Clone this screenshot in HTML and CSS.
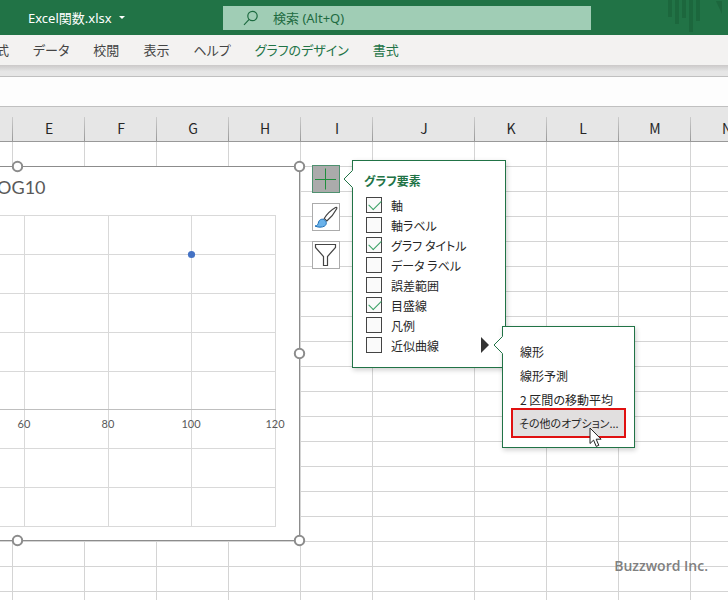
FILE: index.html
```html
<!DOCTYPE html>
<html lang="ja">
<head>
<meta charset="utf-8">
<title>Excel関数.xlsx</title>
<link rel="stylesheet" href="styles.css">
</head>
<body>
<div class="app">
  <header class="titlebar">
    <button class="filename" type="button">Excel関数.xlsx<span class="caret"></span></button>
    <label class="search">
      <svg width="16" height="16" viewBox="0 0 16 16" fill="none" stroke="#1e6b41" stroke-width="1.2"><circle cx="9.5" cy="6" r="4.7"/><path d="M6.2 9.4 1 14.8"/></svg>
      <input type="text" placeholder="検索 (Alt+Q)">
    </label>
    <svg class="art" width="60" height="35" viewBox="0 0 60 35" fill="#1c673d"><path d="M0 0h4v17H0zM7 0h4v24H7zM14 0h4v18h-4zM21 0h4v32h-4zM28 0h4v21h-4zM48 1h6v13z"/></svg>
  </header>
  <nav class="tabs">
    <button type="button">数式</button>
    <button type="button">データ</button>
    <button type="button">校閲</button>
    <button type="button">表示</button>
    <button type="button">ヘルプ</button>
    <button type="button" class="context">グラフのデザイン</button>
    <button type="button" class="context">書式</button>
  </nav>
  <div class="ribbon-edge"></div>
  <input class="formula" type="text" aria-label="数式バー">
  <main class="sheet">
    <table>
      <colgroup><col class="edge"><col><col><col><col><col><col class="wide"><col><col><col><col></colgroup>
      <thead><tr><th></th><th>E</th><th>F</th><th>G</th><th>H</th><th>I</th><th>J</th><th>K</th><th>L</th><th>M</th><th>N</th></tr></thead>
      <tbody id="rows"></tbody>
    </table>

    <svg class="chart" width="306" height="388" viewBox="0 159 306 388">
      <path class="chart-area" d="M-265 166.5H299.500V540.500H-265z"/>
      <path class="grid" d="M0 215.500H276M0 254.500H276M0 293.500H276M0 332.500H276M0 371.500H276M0 448.500H276M0 487.500H276M0 526.500H276M24.500 215V527M108.500 215V527M191.500 215V527M275.500 215V527"/>
      <path class="axis" d="M0 409.500H276"/>
      <text class="chart-title" x="17" y="194">LOG10</text>
      <g class="ticks"><text x="24" y="428">60</text><text x="108" y="428">80</text><text x="191" y="428">100</text><text x="275" y="428">120</text></g>
      <circle cx="191.500" cy="254.500" r="3.600" fill="#4472c4"/>
      <g class="handles"><circle cx="17.500" cy="166.500" r="4.700"/><circle cx="299.500" cy="166.500" r="4.700"/><circle cx="299.500" cy="353.500" r="4.700"/><circle cx="17.500" cy="540.500" r="4.700"/><circle cx="299.500" cy="540.500" r="4.700"/></g>
    </svg>

    <div class="chart-tools">
      <button type="button" class="active" aria-label="グラフ要素"><svg width="26" height="26" viewBox="0 0 26 26" stroke="#1f8f3c" stroke-width="1"><path d="M12.500 2.500v21M2 13.500h21"/></svg></button>
      <button type="button" aria-label="グラフ スタイル"><svg width="26" height="26" viewBox="0 0 26 26"><path d="M11.200 14.500C14 10 19 5.500 22.500 3.500c1-.5 1.700.2 1.200 1.200C21.500 9 18 13.500 13.800 17z" fill="#fff" stroke="#444" stroke-width="1.200"/><path d="M2 22c2.700-.2 3-1.800 3.600-4 .8-2.700 3.900-3.700 6.200-1.900 2.200 1.700 1.900 4.600-.3 6C9.200 23.500 5 23.600 2 22z" fill="#6ab2ea" stroke="#1f6fb5"/></svg></button>
      <button type="button" aria-label="グラフ フィルター"><svg width="26" height="26" viewBox="0 0 26 26" fill="#fff" stroke="#444" stroke-width="1.200"><path d="M2.500 2.500h20v3l-8 9v9h-4v-9l-8-9z"/></svg></button>
    </div>

    <section class="popup elements">
      <svg class="notch" width="10" height="18" viewBox="0 0 10 18"><path d="M10 0 1 9l9 9z" fill="#fff"/><path d="M9.500.5 1 9l8.500 8.500" fill="none" stroke="#217346"/></svg>
      <h2>グラフ要素</h2>
      <label><input type="checkbox" checked>軸</label>
      <label><input type="checkbox">軸ラベル</label>
      <label><input type="checkbox" checked>グラフ タイトル</label>
      <label><input type="checkbox">データ ラベル</label>
      <label><input type="checkbox">誤差範囲</label>
      <label><input type="checkbox" checked>目盛線</label>
      <label><input type="checkbox">凡例</label>
      <label><input type="checkbox">近似曲線<span class="more"></span></label>
    </section>

    <section class="popup trend">
      <svg class="notch" width="10" height="18" viewBox="0 0 10 18"><path d="M10 0 1 9l9 9z" fill="#fff"/><path d="M9.500.5 1 9l8.500 8.500" fill="none" stroke="#217346"/></svg>
      <button type="button">線形</button>
      <button type="button">線形予測</button>
      <button type="button">2 区間の移動平均</button>
      <button type="button" class="current">その他のオプション...</button>
    </section>

    <svg class="cursor" width="14" height="21" viewBox="0 0 14 21"><path d="M1 1v15.500l3.600-3.400 2.600 6.300 2.600-1.100-2.600-6.100h4.900z" fill="#fff" stroke="#222"/></svg>
    <p class="watermark">Buzzword Inc.</p>
  </main>
</div>
<script src="rows.js"></script>
</body>
</html>
```

FILE: rows.js
```js
const body = document.getElementById('rows');
const columns = document.querySelectorAll('col').length;
for (let r = 0; r < 60; r++) {
  const row = body.insertRow();
  for (let c = 0; c < columns; c++) row.insertCell();
}
```

FILE: styles.css
```css
* { box-sizing: border-box; }

body {
  margin: 0;
  font-family: "Noto Sans CJK JP", sans-serif;
  font-feature-settings: "palt";
  font-size: 12px;
  color: #262626;
}

button, input {
  font: inherit;
  font-feature-settings: inherit;
  color: inherit;
  border: 0;
  padding: 0;
  margin: 0;
  background: none;
}

svg { display: block; }

.app { display: flex; flex-direction: column; height: 100vh; overflow: hidden; }

.titlebar {
  display: flex;
  align-items: center;
  flex: none;
  height: 35px;
  padding-left: 28px;
  background: #217346;
}
.filename {
  display: flex;
  align-items: center;
  gap: 7px;
  flex: 0 0 195px;
  font-family: "Noto Sans", "Noto Sans CJK JP", sans-serif;
  font-size: 13px;
  color: #fff;
}
.caret { border: 3px solid transparent; border-top-color: #fff; border-bottom: 0; }
.search {
  display: flex;
  align-items: center;
  gap: 14px;
  flex: 0 1 368px;
  height: 24px;
  padding-left: 20px;
  background: #a0cdb5;
}
.search input {
  flex: 1;
  min-width: 0;
  font-family: "Noto Sans", "Noto Sans CJK JP", sans-serif;
  font-size: 13px;
}
.search input::placeholder { color: #1e6b41; opacity: 1; }
.art { margin-left: auto; }

.tabs {
  display: flex;
  align-items: center;
  flex: none;
  gap: 24px;
  height: 30px;
  margin-left: -17px;
  padding-bottom: 2px;
  background: #f3f2f1;
  font-size: 13px;
  color: #444;
  white-space: nowrap;
}
.tabs .context { color: #217346; }
.ribbon-edge {
  flex: none;
  height: 12px;
  border-bottom: 1px solid #c0c0c0;
  background: linear-gradient(#cbc9c9, #e6e6e6 60%);
}
.formula {
  flex: none;
  height: 30px;
  border-bottom: 1px solid #c0c0c0;
  background: #fdfdfd;
}

.sheet { position: relative; flex: 1; min-height: 0; overflow: hidden; background: #fff; }
table { table-layout: fixed; width: 763px; border-spacing: 0; }
col { width: 72px; }
col.edge { width: 13px; }
col.wide { width: 102px; }
th {
  height: 35px;
  padding: 8px 0 0;
  border-bottom: 1px solid #999;
  background: linear-gradient(#ccc, #999) right bottom / 1px 24px no-repeat #e6e6e6;
  font-size: 14px;
  font-weight: 400;
  line-height: 24px;
}
td { height: 25px; padding: 0; border: solid #d4d4d4; border-width: 0 1px 1px 0; }

.chart { position: absolute; left: 0; top: 52px; }
.chart-area { fill: #fff; stroke: #8c8c8c; }
.grid { stroke: #d9d9d9; }
.axis { stroke: #bfbfbf; }
.chart-title { font: 18px Lato, sans-serif; fill: #595959; text-anchor: middle; }
.ticks { font: 11px Lato, sans-serif; fill: #595959; text-anchor: middle; }
.handles { fill: #fff; stroke: #8c8c8c; stroke-width: 2; }

.chart-tools {
  position: absolute;
  left: 312px;
  top: 58px;
  display: flex;
  flex-direction: column;
  gap: 10px;
}
.chart-tools button { width: 28px; height: 28px; border: 1px solid #ababab; background: #fff; }
.chart-tools .active { border-color: #4f9170; background: #ababab; }

.popup {
  position: absolute;
  border: 1px solid #217346;
  background: #fff;
  box-shadow: 1px 2px 5px rgba(0, 0, 0, 0.2);
  white-space: nowrap;
}
.notch { position: absolute; left: -10px; top: 9px; }
.elements { left: 352px; top: 53px; width: 154px; padding: 10px 11px 12px; }
h2 { margin: 0 0 4px; font-size: 12px; line-height: 20px; color: #217346; }
.elements label {
  display: flex;
  align-items: center;
  gap: 9px;
  height: 20px;
  padding-left: 2px;
}
.elements input {
  appearance: none;
  width: 16px;
  height: 16px;
  border: 1px solid #444;
  background: #fafafa;
}
.elements input:checked::before {
  content: "";
  display: block;
  width: 11px;
  height: 6px;
  margin: 2px;
  border: solid #3aa065;
  border-width: 0 0 1px 1px;
  transform: rotate(-45deg);
}
.more { margin: 0 5px 0 auto; border: 8px solid transparent; border-left-color: #333; border-right: 0; }

.trend { left: 502px; top: 219px; width: 133px; padding: 12px 8px 9px; }
.trend button { display: block; width: 100%; height: 24px; padding-left: 9px; text-align: left; }
.trend .current {
  height: 30px;
  margin-top: -3px;
  padding-left: 6px;
  border: 2px solid #e01010;
  background: #e1dfdf;
  font-size: 11px;
}

.cursor { position: absolute; left: 589px; top: 320px; }
.watermark {
  position: absolute;
  right: 20px;
  bottom: 24px;
  margin: 0;
  font: 600 14px/20px "Open Sans", sans-serif;
  color: #808080;
}
```
